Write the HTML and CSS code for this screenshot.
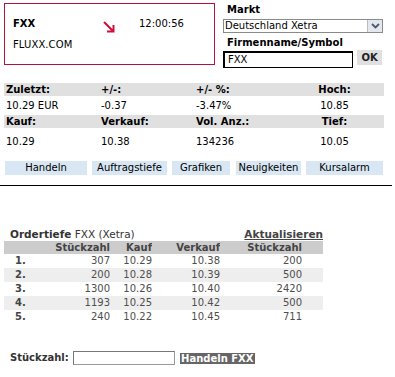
FILE: index.html
```html
<!DOCTYPE html>
<html>
<head>
<meta charset="utf-8">
<link rel="stylesheet" href="styles.css">
</head>
<body>
<div class="top">
  <div class="quote-box">
    <div class="qrow">
      <span class="sym">FXX</span>
      <svg class="arrow" width="14" height="14" viewBox="0 0 14 14"><path d="M2 2 L11 11 M5 11.5 L11.5 11.5 L11.5 5" fill="none" stroke="#d0103a" stroke-width="2"/></svg>
      <span class="time">12:00:56</span>
    </div>
    <div class="company">FLUXX.COM</div>
  </div>
  <div class="search">
    <div class="lbl">Markt</div>
    <div class="select"><span class="sel-text">Deutschland Xetra</span><span class="sel-btn"><svg width="9" height="6" viewBox="0 0 9 6"><path d="M1 1 L4.5 4.5 L8 1" fill="none" stroke="#4a5a70" stroke-width="1.8"/></svg></span></div>
    <div class="lbl lbl2">Firmenname/Symbol</div>
    <div class="inrow"><div class="sym-input">FXX</div><div class="ok">OK</div></div>
  </div>
</div>

<div class="quote-grid">
  <div class="hd">Zuletzt:</div><div class="hd">+/-:</div><div class="hd">+/- %:</div><div class="hd c">Hoch:</div>
  <div class="d1">10.29 EUR</div><div class="d1">-0.37</div><div class="d1">-3.47%</div><div class="d1 c">10.85</div>
  <div class="hd">Kauf:</div><div class="hd">Verkauf:</div><div class="hd">Vol. Anz.:</div><div class="hd c">Tief:</div>
  <div class="d2">10.29</div><div class="d2">10.38</div><div class="d2">134236</div><div class="d2 c">10.05</div>
</div>

<div class="tabs">
  <div class="tab w1">Handeln</div>
  <div class="tab w2">Auftragstiefe</div>
  <div class="tab w3">Grafiken</div>
  <div class="tab w4">Neuigkeiten</div>
  <div class="tab w5">Kursalarm</div>
</div>

<div class="rule"></div>

<div class="ot-head">
  <div class="ot-title"><b>Ordertiefe</b> FXX (Xetra)</div>
  <div class="refresh">Aktualisieren</div>
</div>
<div class="ot-grid">
  <div class="oh"></div><div class="oh r">Stückzahl</div><div class="oh r">Kauf</div><div class="oh r">Verkauf</div><div class="oh r">Stückzahl</div><div class="oh"></div>
  <div class="on">1.</div><div class="ov">307</div><div class="ov">10.29</div><div class="ov">10.38</div><div class="ov">200</div><div class="ov"></div>
  <div class="on alt">2.</div><div class="ov alt">200</div><div class="ov alt">10.28</div><div class="ov alt">10.39</div><div class="ov alt">500</div><div class="ov alt"></div>
  <div class="on">3.</div><div class="ov">1300</div><div class="ov">10.26</div><div class="ov">10.40</div><div class="ov">2420</div><div class="ov"></div>
  <div class="on alt">4.</div><div class="ov alt">1193</div><div class="ov alt">10.25</div><div class="ov alt">10.42</div><div class="ov alt">500</div><div class="ov alt"></div>
  <div class="on">5.</div><div class="ov">240</div><div class="ov">10.22</div><div class="ov">10.45</div><div class="ov">711</div><div class="ov"></div>
</div>

<div class="trade">
  <span class="trade-lbl">Stückzahl:</span>
  <div class="qty"></div>
  <div class="trade-btn">Handeln FXX</div>
</div>
</body>
</html>
```
FILE: styles.css
```css
html, body {
  margin: 0;
  padding: 0;
  background: #fff;
}
body {
  font-family: "DejaVu Sans", Verdana, sans-serif;
  font-size: 10px;
  line-height: 12px;
  color: #000;
}
.top {
  display: flex;
  padding: 3px 0 0 4px;
  height: 62px;
}
.quote-box {
  box-sizing: border-box;
  width: 211px;
  height: 62px;
  border: 1px solid #b2123e;
  padding: 14px 0 0 8px;
}
.qrow {
  display: flex;
  align-items: flex-start;
  height: 21px;
}
.sym {
  font-weight: bold;
  width: 89px;
}
.arrow {
  margin-top: 2px;
  width: 14px;
  height: 14px;
}
.time {
  margin-left: 23px;
}
.company {
  letter-spacing: 0.1px;
}
.search {
  margin-left: 8px;
  width: 160px;
  padding-top: 1px;
}
.lbl {
  font-weight: bold;
  padding-left: 4px;
}
.lbl2 {
  margin-top: 4px;
}
.select {
  margin-top: 3px;
  box-sizing: border-box;
  height: 14px;
  border: 1px solid #8a8a8a;
  display: flex;
  justify-content: space-between;
  align-items: stretch;
}
.sel-text {
  padding-left: 1px;
  line-height: 12px;
}
.sel-btn {
  width: 14px;
  background: #e4e8ee;
  border-left: 1px solid #b8bcc4;
  display: flex;
  align-items: center;
  justify-content: center;
}
.inrow {
  display: flex;
  align-items: flex-start;
  margin-top: 1px;
}
.sym-input {
  box-sizing: border-box;
  width: 130px;
  height: 17px;
  margin-top: 1px;
  border: 1px solid #000;
  border-top-width: 2px;
  border-left-width: 2px;
  padding-left: 3px;
  line-height: 13px;
}
.ok {
  margin-left: 4px;
  width: 25px;
  height: 15px;
  line-height: 15px;
  text-align: center;
  font-weight: bold;
  background: #e0e0e0;
  color: #222;
}
.quote-grid {
  margin: 18px 0 0 4px;
  width: 380px;
  display: grid;
  grid-template-columns: 95px 95px 95px 95px;
}
.quote-grid > div {
  padding-left: 2px;
  white-space: nowrap;
}
.quote-grid .c {
  text-align: center;
  padding-left: 0;
  padding-right: 4px;
}
.hd {
  font-weight: bold;
  background: #e0e0e0;
  height: 13px;
  line-height: 13px;
}
.d1 {
  height: 19px;
  line-height: 19px;
}
.d2 {
  height: 22px;
  padding-top: 8px;
  box-sizing: border-box;
}
.tabs {
  display: flex;
  margin: 11px 0 0 5px;
}
.tab {
  height: 14px;
  line-height: 14px;
  background: #d8e7f3;
  text-align: center;
  margin-right: 5px;
  white-space: nowrap;
}
.w1 { width: 82px; }
.w2 { width: 75px; }
.w3 { width: 58px; margin-right: 6px; }
.w4 { width: 65px; }
.w5 { width: 77px; margin-right: 0; }
.rule {
  margin-top: 10px;
  width: 392px;
  height: 1px;
  background: #000;
}
.ot-head {
  margin: 42px 0 0 4px;
  width: 319px;
  display: flex;
  justify-content: space-between;
  color: #333;
  font-size: 10.5px;
}
.ot-title {
  padding-left: 6px;
}
.refresh {
  font-weight: bold;
  text-decoration: underline;
  color: #444;
}
.ot-grid {
  margin: 1px 0 0 4px;
  width: 319px;
  display: grid;
  grid-template-columns: 50px 56px 42px 68px 82px 21px;
  color: #4e4e4e;
}
.oh {
  background: #cccccc;
  font-weight: bold;
  color: #444;
  height: 13px;
  line-height: 13px;
  white-space: nowrap;
}
.r { text-align: right; }
.on {
  font-weight: bold;
  padding-left: 11px;
  height: 14px;
  line-height: 14px;
  color: #444;
}
.ov {
  text-align: right;
  height: 14px;
  line-height: 14px;
}
.alt { background: #eeeeee; }
.trade {
  margin: 27px 0 0 10px;
  display: flex;
  align-items: center;
}
.trade-lbl {
  font-weight: bold;
  color: #333;
}
.qty {
  margin-left: 4px;
  box-sizing: border-box;
  width: 102px;
  height: 14px;
  border: 1px solid #999;
  border-top-color: #777;
  border-left-color: #777;
}
.trade-btn {
  margin-left: 5px;
  width: 75px;
  height: 11px;
  line-height: 11px;
  background: #666;
  color: #fff;
  font-weight: bold;
  text-align: center;
  white-space: nowrap;
}
```
